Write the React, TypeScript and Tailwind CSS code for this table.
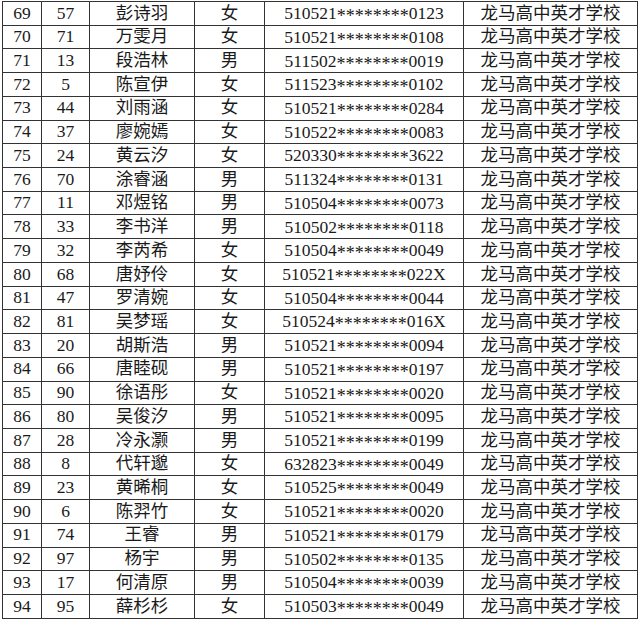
const rows: [number, number, string, string, string][] = [
  [69, 57, '彭诗羽', '女', '510521********0123'],
  [70, 71, '万雯月', '女', '510521********0108'],
  [71, 13, '段浩林', '男', '511502********0019'],
  [72, 5, '陈宣伊', '女', '511523********0102'],
  [73, 44, '刘雨涵', '女', '510521********0284'],
  [74, 37, '廖婉嫣', '女', '510522********0083'],
  [75, 24, '黄云汐', '女', '520330********3622'],
  [76, 70, '涂睿涵', '男', '511324********0131'],
  [77, 11, '邓煜铭', '男', '510504********0073'],
  [78, 33, '李书洋', '男', '510502********0118'],
  [79, 32, '李芮希', '女', '510504********0049'],
  [80, 68, '唐妤伶', '女', '510521********022X'],
  [81, 47, '罗清婉', '女', '510504********0044'],
  [82, 81, '吴梦瑶', '女', '510524********016X'],
  [83, 20, '胡斯浩', '男', '510521********0094'],
  [84, 66, '唐睦砚', '男', '510521********0197'],
  [85, 90, '徐语彤', '女', '510521********0020'],
  [86, 80, '吴俊汐', '男', '510521********0095'],
  [87, 28, '冷永灏', '男', '510521********0199'],
  [88, 8, '代轩邈', '女', '632823********0049'],
  [89, 23, '黄晞桐', '女', '510525********0049'],
  [90, 6, '陈羿竹', '女', '510521********0020'],
  [91, 74, '王睿', '男', '510521********0179'],
  [92, 97, '杨宇', '男', '510502********0135'],
  [93, 17, '何清原', '男', '510504********0039'],
  [94, 95, '薛杉杉', '女', '510503********0049'],
];

const school = '龙马高中英才学校';

// masked id: asterisks sit on the middle of the line, as in the source table
function Card({ value }: { value: string }) {
  const head = value.slice(0, 6);
  const stars = value.slice(6, 14);
  const tail = value.slice(14);
  return (
    <>
      {head}
      <span className="relative top-[3px] text-[18px]">{stars}</span>
      {tail}
    </>
  );
}

export default function App() {
  return (
    <div className="min-h-[638px] w-[640px] bg-white pl-[2px] pt-[1px]">
      <table
        className="w-[635px] table-fixed border-collapse text-[17.5px] leading-none text-[#1a1a1a]"
        style={{ fontFamily: '"Liberation Serif", "Noto Sans CJK SC", serif' }}
      >
        <colgroup>
          <col className="w-[39px]" />
          <col className="w-[48px]" />
          <col className="w-[105px]" />
          <col className="w-[70px]" />
          <col className="w-[199px]" />
          <col className="w-[174px]" />
        </colgroup>
        <tbody>
          {rows.map(([no, id, name, sex, card]) => (
            <tr key={no} className="h-[23.73px]">
              <td className="border border-[#333] p-0 text-center">{no}</td>
              <td className="border border-[#333] p-0 text-center">{id}</td>
              <td className="border border-[#333] p-0 text-center">{name}</td>
              <td className="border border-[#333] p-0 text-center">{sex}</td>
              <td className="border border-[#333] p-0 text-center">
                <Card value={card} />
              </td>
              <td className="border border-[#333] p-0 text-center">{school}</td>
            </tr>
          ))}
        </tbody>
      </table>
    </div>
  );
}
